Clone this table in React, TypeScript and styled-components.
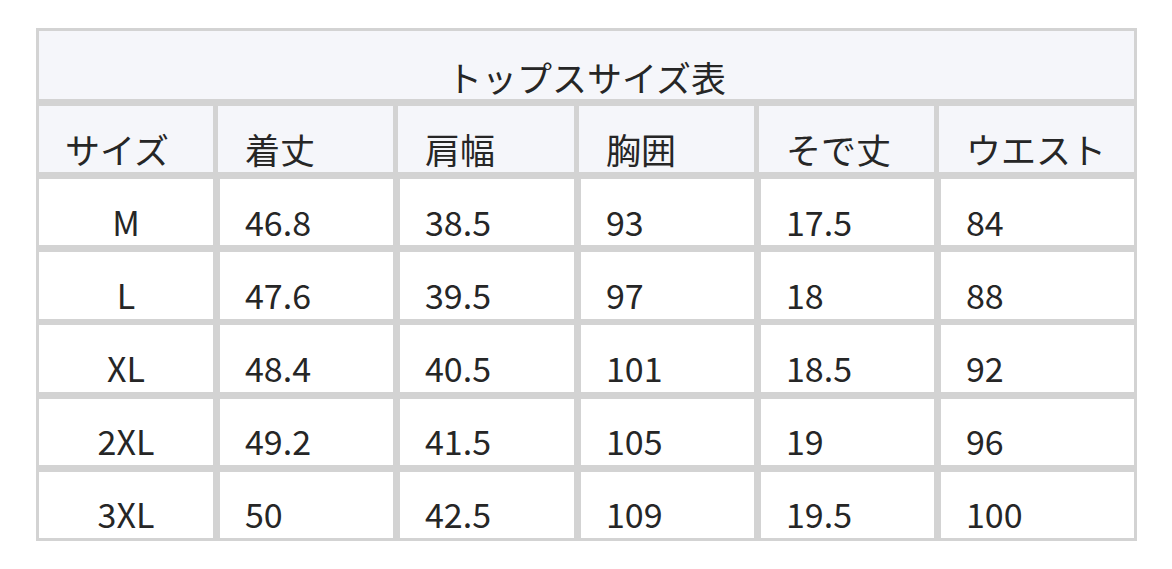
import React from 'react';
import styled, { createGlobalStyle } from 'styled-components';

const GlobalStyle = createGlobalStyle`
  html, body {
    margin: 0;
    padding: 0;
    background: #ffffff;
  }
  body {
    font-family: "Noto Sans CJK JP", "Noto Sans", sans-serif;
    color: #262626;
  }
`;

const Page = styled.div`
  padding: 28px 0 0 36px;
`;

const SizeTable = styled.div`
  width: 1101px;
  box-sizing: border-box;
  padding: 3px;
  background: #d3d3d3;
  display: grid;
  grid-template-columns: 174px 173px 174px 173px 173px 1fr;
  grid-template-rows: 68px repeat(6, 66.3px);
  column-gap: 7px;
  row-gap: 6.9px;
`;

const TitleCell = styled.div`
  grid-column: 1 / -1;
  background: #f5f6fa;
  display: flex;
  align-items: flex-end;
  justify-content: center;
  padding-bottom: 5px;
  font-size: 35px;
  line-height: 1;
  box-sizing: border-box;
`;

const HeadCell = styled.div<{ $first?: boolean }>`
  background: #f5f6fa;
  display: flex;
  align-items: flex-end;
  padding: 0 0 2px ${p => (p.$first ? '26px' : '27px')};
  margin-left: ${p => (p.$first ? '0' : '-2px')};
  box-sizing: border-box;
  font-size: 35px;
  line-height: 1.2;
`;

const Cell = styled.div<{ $center?: boolean }>`
  background: #ffffff;
  display: flex;
  align-items: flex-end;
  justify-content: ${p => (p.$center ? 'center' : 'flex-start')};
  padding: 0 0 3px ${p => (p.$center ? '0' : '25px')};
  box-sizing: border-box;
  font-size: 34px;
  line-height: 1.2;
`;

const headers = ['サイズ', '着丈', '肩幅', '胸囲', 'そで丈', 'ウエスト'];

const rows: string[][] = [
  ['M', '46.8', '38.5', '93', '17.5', '84'],
  ['L', '47.6', '39.5', '97', '18', '88'],
  ['XL', '48.4', '40.5', '101', '18.5', '92'],
  ['2XL', '49.2', '41.5', '105', '19', '96'],
  ['3XL', '50', '42.5', '109', '19.5', '100'],
];

export default function App() {
  return (
    <Page>
      <GlobalStyle />
      <SizeTable>
        <TitleCell>トップスサイズ表</TitleCell>
        {headers.map((h, i) => (
          <HeadCell key={h} $first={i === 0}>
            {h}
          </HeadCell>
        ))}
        {rows.map(r =>
          r.map((v, i) => (
            <Cell key={r[0] + i} $center={i === 0}>
              {v}
            </Cell>
          ))
        )}
      </SizeTable>
    </Page>
  );
}
